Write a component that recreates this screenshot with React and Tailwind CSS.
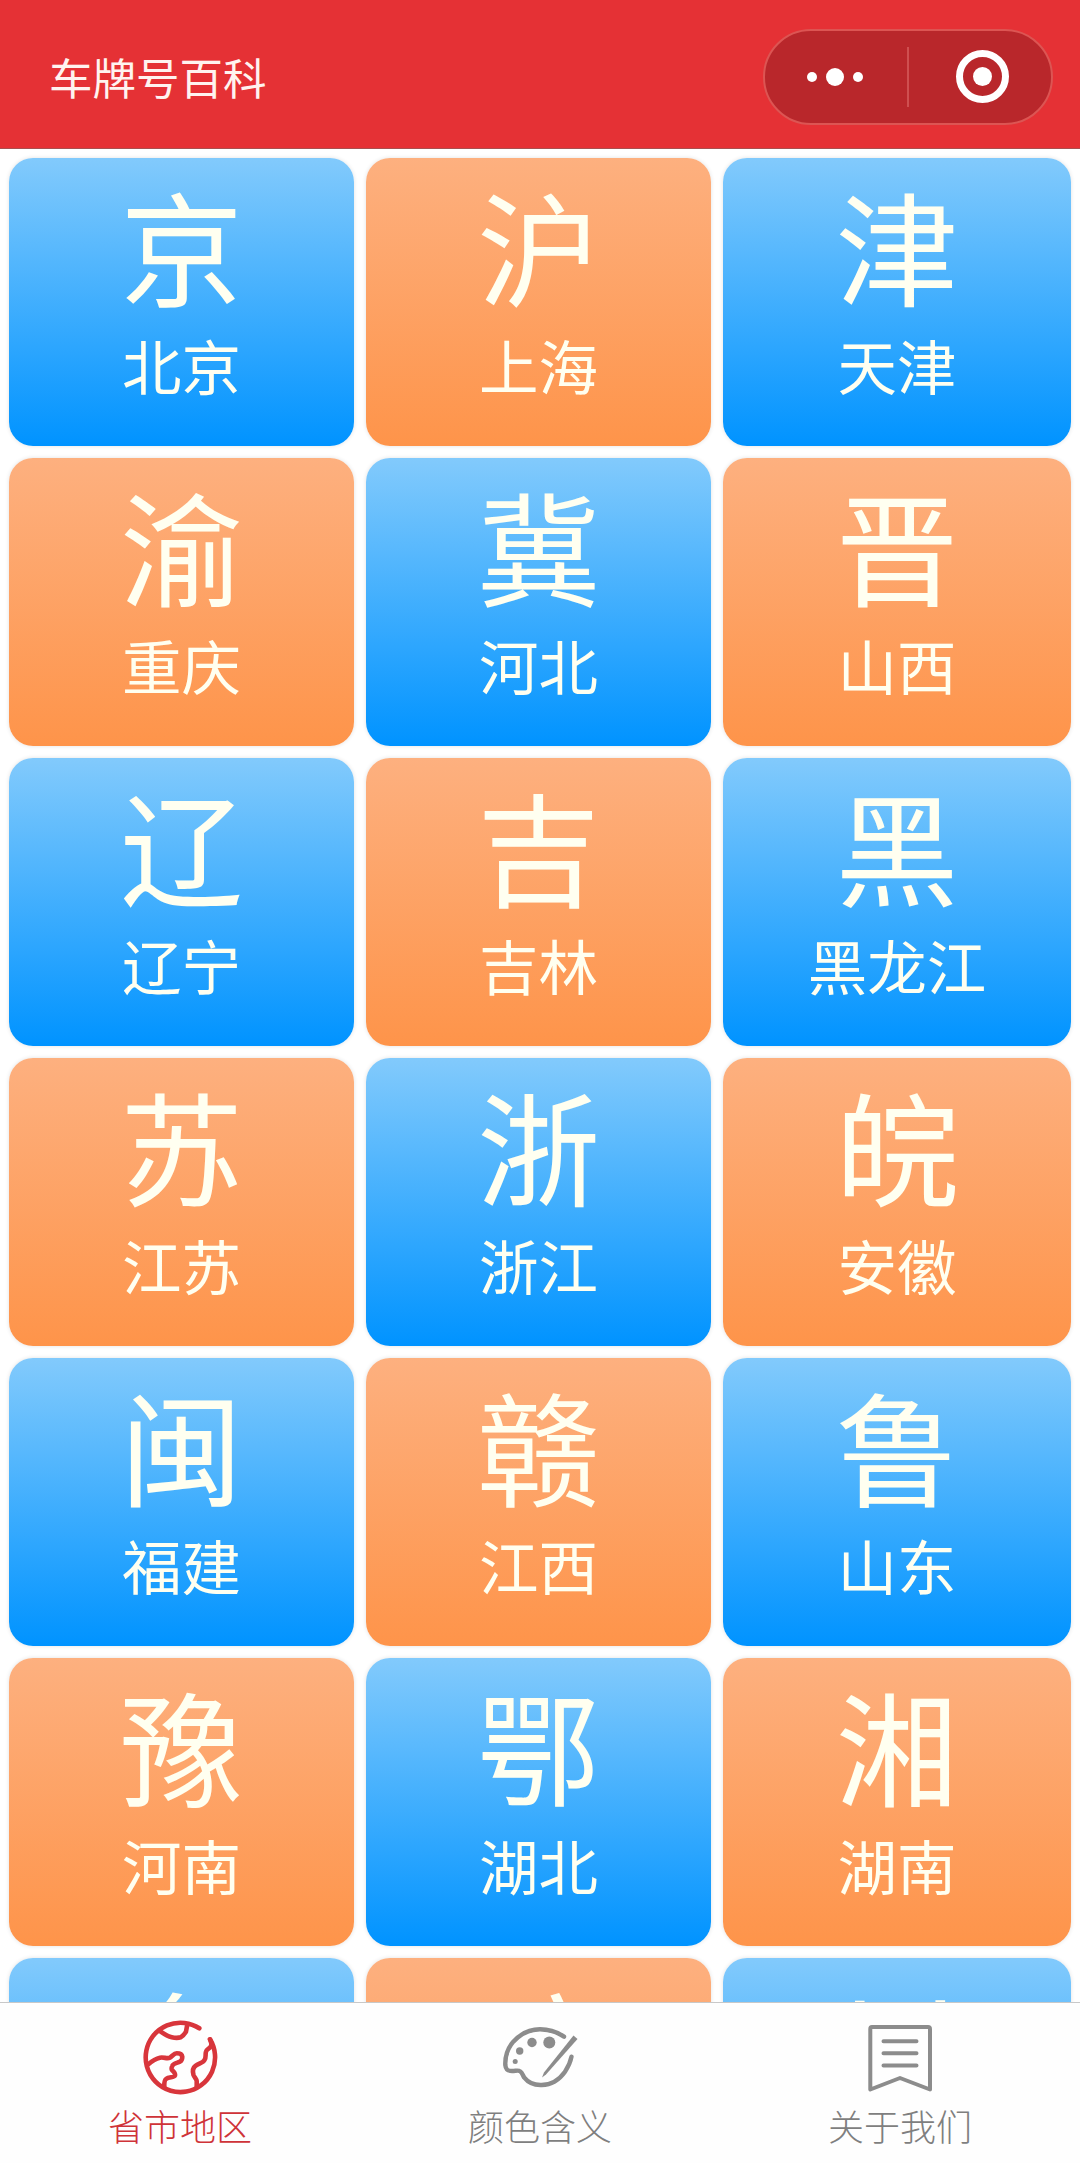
const provinces = [
  ['京', '北京'], ['沪', '上海'], ['津', '天津'],
  ['渝', '重庆'], ['冀', '河北'], ['晋', '山西'],
  ['辽', '辽宁'], ['吉', '吉林'], ['黑', '黑龙江'],
  ['苏', '江苏'], ['浙', '浙江'], ['皖', '安徽'],
  ['闽', '福建'], ['赣', '江西'], ['鲁', '山东'],
  ['豫', '河南'], ['鄂', '湖北'], ['湘', '湖南'],
  ['粤'], ['琼'], ['川'],
];

function Header() {
  return (
    <header className="flex h-[149px] shrink-0 items-center justify-between border-b border-[#a85050] bg-[#e53135] pl-[49px] pr-[27px]">
      <h1 className="mt-[5px] text-[43.5px] leading-[60px] font-normal text-[#fff3f0]">车牌号百科</h1>
      <div className="mt-[5px] flex h-[96px] w-[290px] items-center rounded-full border-2 border-[#dc5553] bg-[#b9272b]">
        <div className="flex w-[142px] items-center justify-center gap-[9px] pr-[2px]">
          <span className="size-[10px] rounded-full bg-white" />
          <span className="size-[18px] rounded-full bg-white" />
          <span className="size-[10px] rounded-full bg-white" />
        </div>
        <div className="h-[60px] w-[2px] bg-[#cf4f50]" />
        <div className="flex flex-1 items-center justify-center pl-[5px]">
          <span className="flex size-[53px] items-center justify-center rounded-full border-[7px] border-white">
            <span className="size-[19px] rounded-full bg-white" />
          </span>
        </div>
      </div>
    </header>
  );
}

function Card({ abbr, name, blue }) {
  return (
    <div
      className={
        'flex h-[288px] flex-col items-center rounded-[24px] pt-[22px] text-[#fffff0] shadow-[0_0_4px_rgba(0,0,0,0.12)] bg-linear-to-b/srgb ' +
        (blue ? 'from-[#82cafc] to-[#0093ff]' : 'from-[#fdb07f] to-[#fe944a]')
      }
    >
      <div className="h-[126px] text-[123px] leading-[126px]">{abbr}</div>
      {name && <div className="mt-[22px] h-[72px] text-[59.5px] leading-[72px]">{name}</div>}
    </div>
  );
}

function GlobeIcon() {
  return (
    <svg className="size-[76px]" viewBox="0 0 76 76" fill="none" stroke="#d8353b" strokeWidth="4.6" strokeLinecap="round" strokeLinejoin="round">
      <path d="M57.300 9.300A34.700 34.700 0 1 0 68 20.300" />
      <path d="M18.700 12.700C22 15 26 17.500 29.700 18.300C33 19 36.500 19 38.700 18.300C41 17 42.500 15 44 12.700L45.300 5.500" />
      <path d="M6.300 45.300C10 42 14 39.500 18 38.700C22 38 25 40 28 38.700C30.500 37 32 34.300 34.700 34.300C37.500 34.300 40 35.500 40.300 37.700C40.300 40 39.800 41.500 38 42.700C35 44 30.800 44.500 30.300 47C29 49.500 29 50 30.500 51.500C32 53 33.500 54 33 56.500C32 59 27 57.500 24 60C22 61.500 22.300 64 22.300 68" />
      <path d="M68 20.300C69 23 70 25 69 27C67.500 30 64.500 30 64 32.700C63 36 64.500 38 62.500 41C61 44 56.500 44.500 53.700 46.700C50.500 49 50.500 52.500 51.500 56C52.500 58.500 54.700 60 54.700 62V68.300" />
    </svg>
  );
}

function PaletteIcon() {
  return (
    <svg className="size-[76px]" viewBox="0 0 76 76" fill="none" stroke="#8c8c8c" strokeWidth="4.4" strokeLinecap="round" strokeLinejoin="round">
      <path d="M62 17.700C55 13 47 10.300 38 10.300C27 10.300 18 15.500 11.300 22.700C6 29 3 38 3.300 46C3.800 51 6 52 10 52C14 52 16.500 51 18 52.300C20.500 54 20.500 56 22.300 58.700C26.500 64 33 66.300 39.700 66C49 65.700 57.500 60.500 63 52.700C66.500 47.500 68.500 43 69.500 37.700" />
      <path d="M71.500 16.500L75.500 20L44 55.500L40 58.500L42 53.500Z" fill="#8c8c8c" stroke="none" />
      <g fill="#8c8c8c" stroke="none">
        <circle cx="47.300" cy="23.500" r="6" />
        <circle cx="30" cy="23.500" r="4.700" />
        <circle cx="17.700" cy="32" r="3.700" />
        <circle cx="13.200" cy="42.500" r="2.500" />
      </g>
    </svg>
  );
}

function BookmarkIcon() {
  return (
    <svg className="size-[76px]" viewBox="0 0 76 76" fill="none" stroke="#8c8c8c" strokeWidth="4" strokeLinecap="round" strokeLinejoin="round">
      <path d="M10 8H66Q68 8 68 10V70.500L38 59L8.300 70.500V10Q8.300 8 10 8Z" />
      <path d="M21.500 22.300H54.500M21.500 34.300H54.500M21.500 46.500H54.500" />
    </svg>
  );
}

const tabs = [
  { label: '省市地区', Icon: GlobeIcon, active: true },
  { label: '颜色含义', Icon: PaletteIcon },
  { label: '关于我们', Icon: BookmarkIcon },
];

export default function App() {
  return (
    <div className="flex h-[2163px] w-[1080px] flex-col overflow-hidden bg-white font-['Noto_Sans_CJK_SC',sans-serif]">
      <Header />
      <main className="min-h-0 flex-1 overflow-hidden pl-[9px] pr-[9px] pt-[9px]">
        <div className="grid grid-cols-[345px_345px_348px] gap-[12px]">
          {provinces.map(([abbr, name], i) => (
            <Card key={abbr} abbr={abbr} name={name} blue={i % 2 === 0} />
          ))}
        </div>
      </main>
      <nav className="grid h-[161px] shrink-0 grid-cols-3 border-t border-[#c8c8c8] bg-[#fefefe]">
        {tabs.map(({ label, Icon, active }) => (
          <div key={label} className={'flex flex-col items-center pt-[16px] ' + (active ? 'text-[#cf3338]' : 'text-[#7f7f7f]')}>
            <Icon />
            <span className="mt-[5px] text-[36px] leading-[50px] font-light">{label}</span>
          </div>
        ))}
      </nav>
    </div>
  );
}
